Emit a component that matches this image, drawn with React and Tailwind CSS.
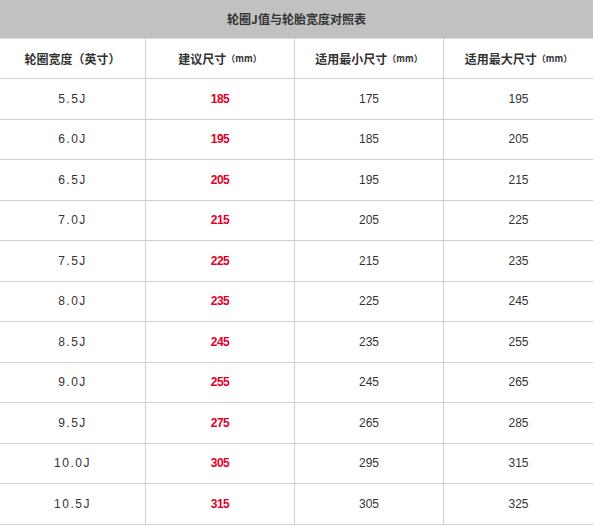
const rows = [
  ["5.5J", "185", "175", "195"],
  ["6.0J", "195", "185", "205"],
  ["6.5J", "205", "195", "215"],
  ["7.0J", "215", "205", "225"],
  ["7.5J", "225", "215", "235"],
  ["8.0J", "235", "225", "245"],
  ["8.5J", "245", "235", "255"],
  ["9.0J", "255", "245", "265"],
  ["9.5J", "275", "265", "285"],
  ["10.0J", "305", "295", "315"],
  ["10.5J", "315", "305", "325"],
];

const cjk = "font-['SimSun','Noto_Sans_CJK_SC',sans-serif]";

function Mm() {
  return <span className="text-[9px] font-bold">（mm）</span>;
}

export default function App() {
  return (
    <div className={`w-[593px] h-[528px] overflow-hidden bg-white text-[#333] ${cjk}`}>
      {/* 표 제목 */}
      <div className="h-[39px] bg-[#c1c1c1] border-b border-[#d3dae4] flex items-center justify-center text-[12px] font-bold text-[#333]">
        轮圈J值与轮胎宽度对照表
      </div>

      {/* 열 제목 */}
      <div className="flex h-[40px] border-b border-[#c9d1dd] text-[12px] font-bold">
        <div className="w-[146px] flex items-center justify-center border-r border-[#c9d1dd]">
          轮圈宽度（英寸）
        </div>
        <div className="w-[149px] flex items-center justify-center border-r border-[#c9d1dd]">
          建议尺寸<Mm />
        </div>
        <div className="w-[149px] flex items-center justify-center border-r border-[#c9d1dd]">
          适用最小尺寸<Mm />
        </div>
        <div className="w-[149px] flex items-center justify-center">
          适用最大尺寸<Mm />
        </div>
      </div>

      {/* 데이터 */}
      {rows.map((r) => (
        <div key={r[0]} className="flex h-[40.5px] border-b border-[#c9d1dd] text-[12px]">
          <div className="w-[146px] flex items-center justify-center border-r border-[#c9d1dd] font-['Liberation_Sans',sans-serif] tracking-[1.5px]">
            {r[0]}
          </div>
          <div className="w-[149px] flex items-center justify-center border-r border-[#c9d1dd] font-['Liberation_Sans',sans-serif] font-bold text-[#e0002a] tracking-[-0.5px]">
            {r[1]}
          </div>
          <div className="w-[149px] flex items-center justify-center border-r border-[#c9d1dd] font-['Liberation_Sans',sans-serif]">
            {r[2]}
          </div>
          <div className="w-[149px] flex items-center justify-center font-['Liberation_Sans',sans-serif]">
            {r[3]}
          </div>
        </div>
      ))}
    </div>
  );
}
